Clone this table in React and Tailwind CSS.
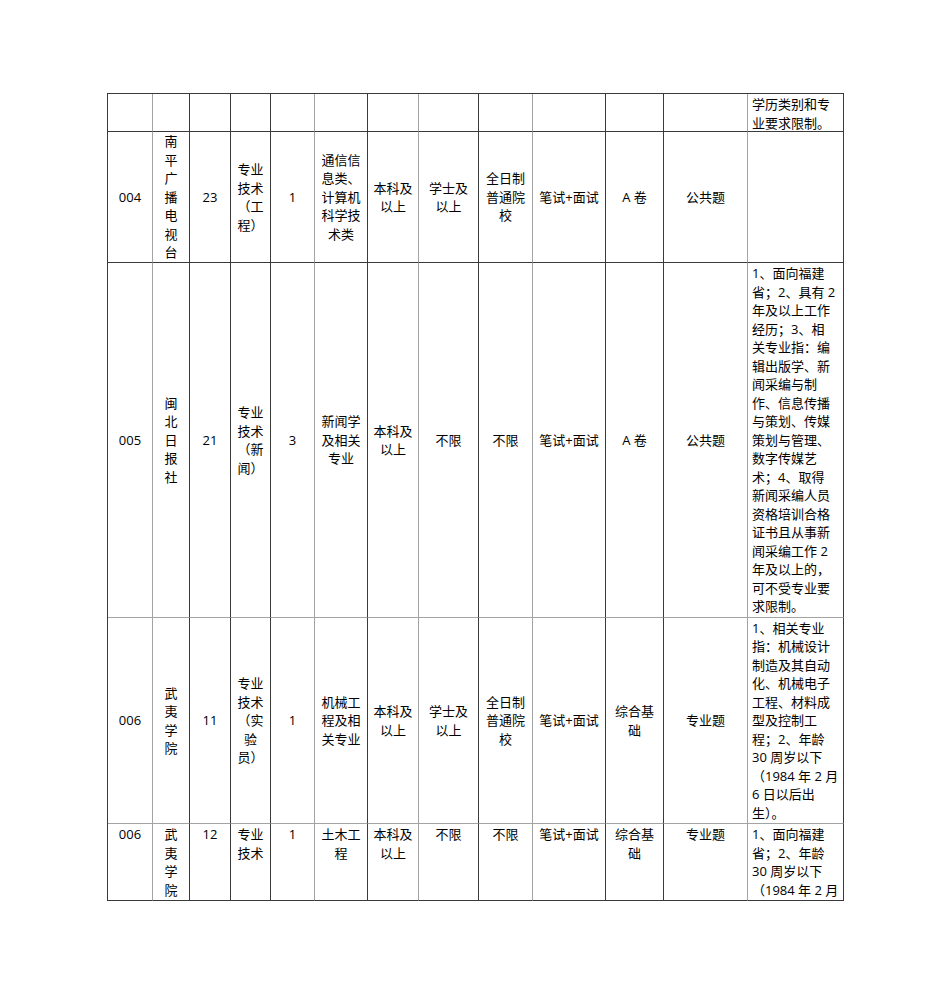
const COL_W = "grid-cols-[45px_37px_41px_40px_44px_53px_51px_60px_54px_73px_58px_84px_96px]";
const ROW_H = "grid-rows-[38px_131px_355px_206px_77px]";

const DARK_R = "border-r-[#3a3a3a]";
const GRAY_R = "border-r-[#a3a3a3]";
const colBorder = [GRAY_R, DARK_R, DARK_R, DARK_R, GRAY_R, DARK_R, GRAY_R, DARK_R, GRAY_R, DARK_R, DARK_R, GRAY_R, DARK_R];
const DARK_B = "border-b-[#3a3a3a]";
const GRAY_B = "border-b-[#a3a3a3]";
const rowBorder = [DARK_B, DARK_B, GRAY_B, GRAY_B, DARK_B];

const LP = "\uFF08"; // (
const RP = "\uFF09"; // )
const SC = "\uFF1B"; // ;
const CO = "\uFF1A"; // :
const CM = "\uFF0C"; // ,

const remarks3 = [
  "1、面向福建",
  `省${SC}2、具有 2`,
  "年及以上工作",
  `经历${SC}3、相`,
  `关专业指${CO}编`,
  "辑出版学、新",
  "闻采编与制",
  "作、信息传播",
  "与策划、传媒",
  "策划与管理、",
  "数字传媒艺",
  `术${SC}4、取得`,
  "新闻采编人员",
  "资格培训合格",
  "证书且从事新",
  "闻采编工作 2",
  `年及以上的${CM}`,
  "可不受专业要",
  "求限制。",
];

const remarks4 = [
  "1、相关专业",
  `指${CO}机械设计`,
  "制造及其自动",
  "化、机械电子",
  "工程、材料成",
  "型及控制工",
  `程${SC}2、年龄`,
  "30 周岁以下",
  `${LP}1984 年 2 月`,
  "6 日以后出",
  `生${RP}。`,
];

const rows = [
  {
    top: true,
    cells: [[], [], [], [], [], [], [], [], [], [], [], [], ["学历类别和专", "业要求限制。"]],
  },
  {
    top: false,
    cells: [
      ["004"],
      ["南", "平", "广", "播", "电", "视", "台"],
      ["23"],
      ["专业", "技术", `${LP}工`, `程${RP}`],
      ["1"],
      ["通信信", "息类、", "计算机", "科学技", "术类"],
      ["本科及", "以上"],
      ["学士及", "以上"],
      ["全日制", "普通院", "校"],
      ["笔试+面试"],
      ["A 卷"],
      ["公共题"],
      [],
    ],
  },
  {
    top: false,
    cells: [
      ["005"],
      ["闽", "北", "日", "报", "社"],
      ["21"],
      ["专业", "技术", `${LP}新`, `闻${RP}`],
      ["3"],
      ["新闻学", "及相关", "专业"],
      ["本科及", "以上"],
      ["不限"],
      ["不限"],
      ["笔试+面试"],
      ["A 卷"],
      ["公共题"],
      remarks3,
    ],
  },
  {
    top: false,
    cells: [
      ["006"],
      ["武", "夷", "学", "院"],
      ["11"],
      ["专业", "技术", `${LP}实`, "验", `员${RP}`],
      ["1"],
      ["机械工", "程及相", "关专业"],
      ["本科及", "以上"],
      ["学士及", "以上"],
      ["全日制", "普通院", "校"],
      ["笔试+面试"],
      ["综合基", "础"],
      ["专业题"],
      remarks4,
    ],
  },
  {
    top: true,
    cells: [
      ["006"],
      ["武", "夷", "学", "院"],
      ["12"],
      ["专业", "技术"],
      ["1"],
      ["土木工", "程"],
      ["本科及", "以上"],
      ["不限"],
      ["不限"],
      ["笔试+面试"],
      ["综合基", "础"],
      ["专业题"],
      ["1、面向福建", `省${SC}2、年龄`, "30 周岁以下", `${LP}1984 年 2 月`],
    ],
  },
];

function Cell({ lines, ci, ri, top }) {
  const isRemark = ci === 12;
  const align = isRemark ? "items-start text-left pl-[4px]" : "items-center text-center";
  const valign = top ? "justify-start pt-[1px]" : "justify-center";
  return (
    <div
      className={`flex flex-col overflow-hidden border-r border-b ${colBorder[ci]} ${rowBorder[ri]} ${align} ${valign}`}
    >
      {lines.map((l, i) => (
        <div key={i} className="whitespace-pre">
          {l}
        </div>
      ))}
    </div>
  );
}

export default function App() {
  return (
    <div className="min-h-[1008px] bg-white pt-[93px] pl-[107px] font-['Open_Sans','Noto_Sans_CJK_SC',sans-serif] text-[13px] leading-[18.5px] text-black">
      <div className={`grid w-max ${COL_W} ${ROW_H} border-l border-t border-l-[#3a3a3a] border-t-[#3a3a3a]`}>
        {rows.map((row, ri) =>
          row.cells.map((lines, ci) => (
            <Cell key={`${ri}-${ci}`} lines={lines} ci={ci} ri={ri} top={row.top} />
          ))
        )}
      </div>
    </div>
  );
}
